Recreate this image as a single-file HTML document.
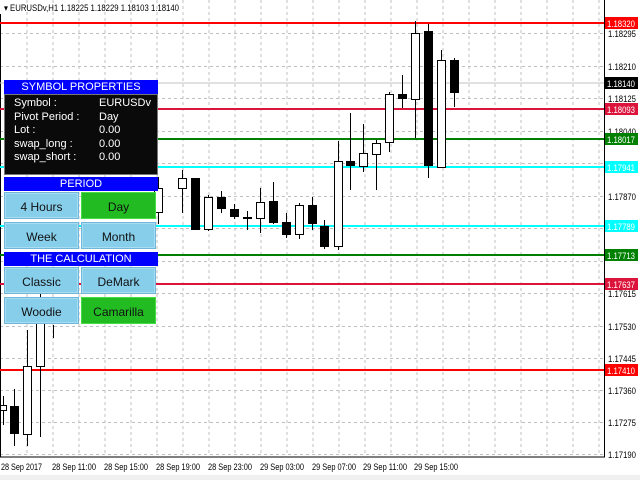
<!DOCTYPE html>
<html><head><style>
body{margin:0;width:640px;height:480px;overflow:hidden;background:#fff;font-family:"Liberation Sans",sans-serif}
.h{position:absolute;left:4px;width:154px;height:14px;background:#0000ff;color:#fff;text-align:center;font-size:11px;line-height:14px}
.b{position:absolute;width:75px;height:27px;background:#87ceeb;border:1px solid #6fb6d8;text-align:center;line-height:28px;font-size:12px;color:#111;box-sizing:border-box;box-shadow:inset 0 0 0 1px #a8dcf0}
.g{background:#22bb22;border-color:#44dd44;box-shadow:none}
</style></head><body>
<svg width="640" height="480" style="position:absolute;left:0;top:0" font-family="Liberation Sans,sans-serif">
<g stroke="#c0c0c0" stroke-dasharray="3,3" stroke-width="1">
<path d="M27 0V456M53 0V456M79 0V456M105 0V456M131 0V456M157 0V456M183 0V456M209 0V456M235 0V456M261 0V456M287 0V456M313 0V456M339 0V456M365 0V456M391 0V456M417 0V456M443 0V456M469 0V456M495 0V456M521 0V456M547 0V456M573 0V456M599 0V456"/>
<path d="M0 33.5H604M0 66.5H604M0 98.5H604M0 131.5H604M0 163.5H604M0 196.5H604M0 228.5H604M0 261.5H604M0 293.5H604M0 326.5H604M0 358.5H604M0 390.5H604M0 422.5H604M0 454.5H604"/>
</g>
<path d="M0.5 14V457H604.5V0" stroke="#000" fill="none"/>
<g stroke-width="2">
<path d="M0 23H604" stroke="#ff0000"/>
<path d="M0 83H604" stroke="#c0c0c0" stroke-width="1"/>
<path d="M0 109H604" stroke="#dc143c"/>
<path d="M0 139H604" stroke="#008000"/>
<path d="M0 167H604" stroke="#00ffff"/>
<path d="M0 226H604" stroke="#00ffff"/>
<path d="M0 255H604" stroke="#008000"/>
<path d="M0 284H604" stroke="#dc143c"/>
<path d="M0 370H604" stroke="#ff0000"/>
</g>
<g stroke="#000" stroke-width="1">
<path d="M3.5 396V425M14.5 389V446M27.5 330V446M40.5 290V437M53.5 325V338M158.5 177V224M182.5 170V213M195.5 178V230M208.5 195V231M221.5 191V213M234.5 204V219M247.5 211V230M260.5 188V233M273.5 182V224M286.5 213V238M299.5 203V239M312.5 197V230M324.5 220V249M338.5 141V250M350.5 113V190M363.5 124V172M376.5 140V190M389.5 92V152M402.5 75V108M415.5 21V138M428.5 24V178M441.5 50V167M454.5 58V107"/>
</g>
<g stroke="#000" fill="#fff">
<rect x="0.5" y="405.5" width="6" height="5"/>
<rect x="23.5" y="366.5" width="8" height="68"/>
<rect x="36.5" y="300.5" width="8" height="66"/>
<rect x="154.5" y="188.5" width="8" height="24"/>
<rect x="178.5" y="178.5" width="8" height="10"/>
<rect x="204.5" y="197.5" width="8" height="32"/>
<rect x="256.5" y="202.5" width="8" height="16"/>
<rect x="295.5" y="205.5" width="8" height="29"/>
<rect x="334.5" y="161.5" width="8" height="85"/>
<rect x="359.5" y="153.5" width="8" height="13"/>
<rect x="372.5" y="143.5" width="8" height="11"/>
<rect x="385.5" y="94.5" width="8" height="48"/>
<rect x="411.5" y="33.5" width="8" height="66"/>
<rect x="437.5" y="60.5" width="8" height="107"/>
</g>
<g fill="#000">
<rect x="10" y="406" width="9" height="28"/>
<rect x="191" y="178" width="9" height="52"/>
<rect x="217" y="197" width="9" height="12"/>
<rect x="230" y="209" width="9" height="8"/>
<rect x="243" y="217" width="9" height="2"/>
<rect x="269" y="201" width="9" height="22"/>
<rect x="282" y="222" width="9" height="13"/>
<rect x="308" y="205" width="9" height="19"/>
<rect x="320" y="226" width="9" height="21"/>
<rect x="346" y="161" width="9" height="5"/>
<rect x="398" y="94" width="9" height="5"/>
<rect x="424" y="31" width="9" height="135"/>
<rect x="450" y="60" width="9" height="33"/>
</g>
<g font-size="9" fill="#000" lengthAdjust="spacingAndGlyphs">
<text x="608" y="37" textLength="28" lengthAdjust="spacingAndGlyphs">1.18295</text><text x="608" y="70" textLength="28" lengthAdjust="spacingAndGlyphs">1.18210</text><text x="608" y="102" textLength="28" lengthAdjust="spacingAndGlyphs">1.18125</text><text x="608" y="135" textLength="28" lengthAdjust="spacingAndGlyphs">1.18040</text><text x="608" y="200" textLength="28" lengthAdjust="spacingAndGlyphs">1.17870</text><text x="608" y="297" textLength="28" lengthAdjust="spacingAndGlyphs">1.17615</text><text x="608" y="330" textLength="28" lengthAdjust="spacingAndGlyphs">1.17530</text><text x="608" y="362" textLength="28" lengthAdjust="spacingAndGlyphs">1.17445</text><text x="608" y="394" textLength="28" lengthAdjust="spacingAndGlyphs">1.17360</text><text x="608" y="426" textLength="28" lengthAdjust="spacingAndGlyphs">1.17275</text><text x="608" y="458" textLength="28" lengthAdjust="spacingAndGlyphs">1.17190</text>
<text x="1" y="470" textLength="41" lengthAdjust="spacingAndGlyphs">28 Sep 2017</text><text x="52" y="470" textLength="44" lengthAdjust="spacingAndGlyphs">28 Sep 11:00</text><text x="104" y="470" textLength="44" lengthAdjust="spacingAndGlyphs">28 Sep 15:00</text><text x="156" y="470" textLength="44" lengthAdjust="spacingAndGlyphs">28 Sep 19:00</text><text x="208" y="470" textLength="44" lengthAdjust="spacingAndGlyphs">28 Sep 23:00</text><text x="260" y="470" textLength="44" lengthAdjust="spacingAndGlyphs">29 Sep 03:00</text><text x="312" y="470" textLength="44" lengthAdjust="spacingAndGlyphs">29 Sep 07:00</text><text x="363" y="470" textLength="44" lengthAdjust="spacingAndGlyphs">29 Sep 11:00</text><text x="414" y="470" textLength="44" lengthAdjust="spacingAndGlyphs">29 Sep 15:00</text>
</g>
<g font-size="9">
<rect x="605" y="17" width="33" height="12" fill="#ff0000"/><text x="607" y="27" fill="#fff" textLength="28" lengthAdjust="spacingAndGlyphs">1.18320</text>
<rect x="605" y="77" width="33" height="12" fill="#000"/><text x="607" y="87" fill="#fff" textLength="28" lengthAdjust="spacingAndGlyphs">1.18140</text>
<rect x="605" y="103" width="33" height="12" fill="#dc143c"/><text x="607" y="113" fill="#fff" textLength="28" lengthAdjust="spacingAndGlyphs">1.18093</text>
<rect x="605" y="133" width="33" height="12" fill="#008000"/><text x="607" y="143" fill="#fff" textLength="28" lengthAdjust="spacingAndGlyphs">1.18017</text>
<rect x="605" y="161" width="33" height="12" fill="#00ffff"/><text x="607" y="171" fill="#fff" textLength="28" lengthAdjust="spacingAndGlyphs">1.17941</text>
<rect x="605" y="220" width="33" height="12" fill="#00ffff"/><text x="607" y="230" fill="#fff" textLength="28" lengthAdjust="spacingAndGlyphs">1.17789</text>
<rect x="605" y="249" width="33" height="12" fill="#008000"/><text x="607" y="259" fill="#fff" textLength="28" lengthAdjust="spacingAndGlyphs">1.17713</text>
<rect x="605" y="278" width="33" height="12" fill="#dc143c"/><text x="607" y="288" fill="#fff" textLength="28" lengthAdjust="spacingAndGlyphs">1.17637</text>
<rect x="605" y="364" width="33" height="12" fill="#ff0000"/><text x="607" y="374" fill="#fff" textLength="28" lengthAdjust="spacingAndGlyphs">1.17410</text>
</g>
<rect x="0" y="475" width="640" height="5" fill="#f0f0f0"/>
<text x="4" y="11" font-size="9" textLength="175" lengthAdjust="spacingAndGlyphs">▾ EURUSDv,H1  1.18225 1.18229 1.18103 1.18140</text>
</svg>
<div class="h" style="top:80px">SYMBOL PROPERTIES</div>
<div style="position:absolute;left:4px;top:94px;width:154px;height:81px;background:#0a0a0a;border:1px solid #777;box-sizing:border-box;color:#fff;font-size:11px;line-height:13.5px">
<div style="position:absolute;left:9px;top:2px">Symbol :<br>Pivot Period :<br>Lot :<br>swap_long :<br>swap_short :</div>
<div style="position:absolute;left:94px;top:2px">EURUSDv<br>Day<br>0.00<br>0.00<br>0.00</div>
</div>
<div class="h" style="top:177px">PERIOD</div>
<div class="b" style="left:4px;top:192px">4 Hours</div>
<div class="b g" style="left:81px;top:192px">Day</div>
<div class="b" style="left:4px;top:222px">Week</div>
<div class="b" style="left:81px;top:222px">Month</div>
<div class="h" style="top:252px">THE CALCULATION</div>
<div class="b" style="left:4px;top:267px">Classic</div>
<div class="b" style="left:81px;top:267px">DeMark</div>
<div class="b" style="left:4px;top:297px">Woodie</div>
<div class="b g" style="left:81px;top:297px">Camarilla</div>
</body></html>
